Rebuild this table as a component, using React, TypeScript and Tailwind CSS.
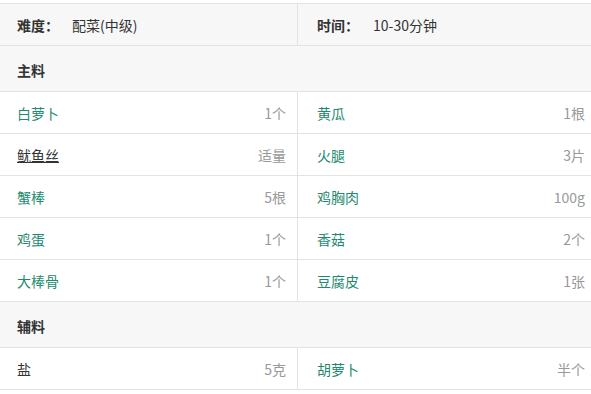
import React from "react";

type Item = { name: string; amount: string; dark?: boolean };

const main: [Item, Item][] = [
  [{ name: "白萝卜", amount: "1个" }, { name: "黄瓜", amount: "1根" }],
  [{ name: "鱿鱼丝", amount: "适量", dark: true }, { name: "火腿", amount: "3片" }],
  [{ name: "蟹棒", amount: "5根" }, { name: "鸡胸肉", amount: "100g" }],
  [{ name: "鸡蛋", amount: "1个" }, { name: "香菇", amount: "2个" }],
  [{ name: "大棒骨", amount: "1个" }, { name: "豆腐皮", amount: "1张" }],
];

const aux: [Item, Item][] = [
  [{ name: "盐", amount: "5克", dark: true }, { name: "胡萝卜", amount: "半个" }],
];

function Cell({ item, side }: { item: Item; side: "l" | "r" }) {
  return (
    <div
      className={
        side === "l"
          ? "flex items-center justify-between pl-[17px] pr-[11px] border-r border-[#e3e3e3]"
          : "flex items-center justify-between pl-[19px] pr-[6px]"
      }
    >
      <span
        className={
          item.dark
            ? item.name === "鱿鱼丝"
              ? "text-[#333] underline underline-offset-[1px] decoration-[#333]"
              : "text-[#333]"
            : "text-[#1f8a70]"
        }
      >
        {item.name}
      </span>
      <span className="text-[#999]">{item.amount}</span>
    </div>
  );
}

function Row({ pair }: { pair: [Item, Item] }) {
  return (
    <div className="grid grid-cols-[298px_1fr] h-[42px] border-b border-[#e3e3e3] bg-white">
      <Cell item={pair[0]} side="l" />
      <Cell item={pair[1]} side="r" />
    </div>
  );
}

function Section({ title }: { title: string }) {
  return (
    <div className="h-[46px] flex items-center pl-[17px] pt-[2px] bg-[#f7f7f7] border-b border-[#e3e3e3] font-bold text-[#333]">
      {title}
    </div>
  );
}

export default function App() {
  return (
    <div
      className="w-full bg-white pt-[3px] text-[14px] leading-none"
      style={{ fontFamily: '"Noto Sans CJK SC", "Noto Sans", sans-serif' }}
    >
      <div className="border-t border-[#e3e3e3]">
        <div className="grid grid-cols-[298px_1fr] h-[42px] bg-[#f7f7f7] border-b border-[#e3e3e3]">
          <div className="flex items-center pl-[17px] border-r border-[#e3e3e3] text-[#333]">
            <span className="font-bold w-[55px]">难度：</span>
            <span>配菜(中级)</span>
          </div>
          <div className="flex items-center pl-[19px] text-[#333]">
            <span className="font-bold w-[56px]">时间：</span>
            <span>10-30分钟</span>
          </div>
        </div>
        <Section title="主料" />
        {main.map((p, i) => (
          <Row key={i} pair={p} />
        ))}
        <Section title="辅料" />
        {aux.map((p, i) => (
          <Row key={i} pair={p} />
        ))}
      </div>
    </div>
  );
}
